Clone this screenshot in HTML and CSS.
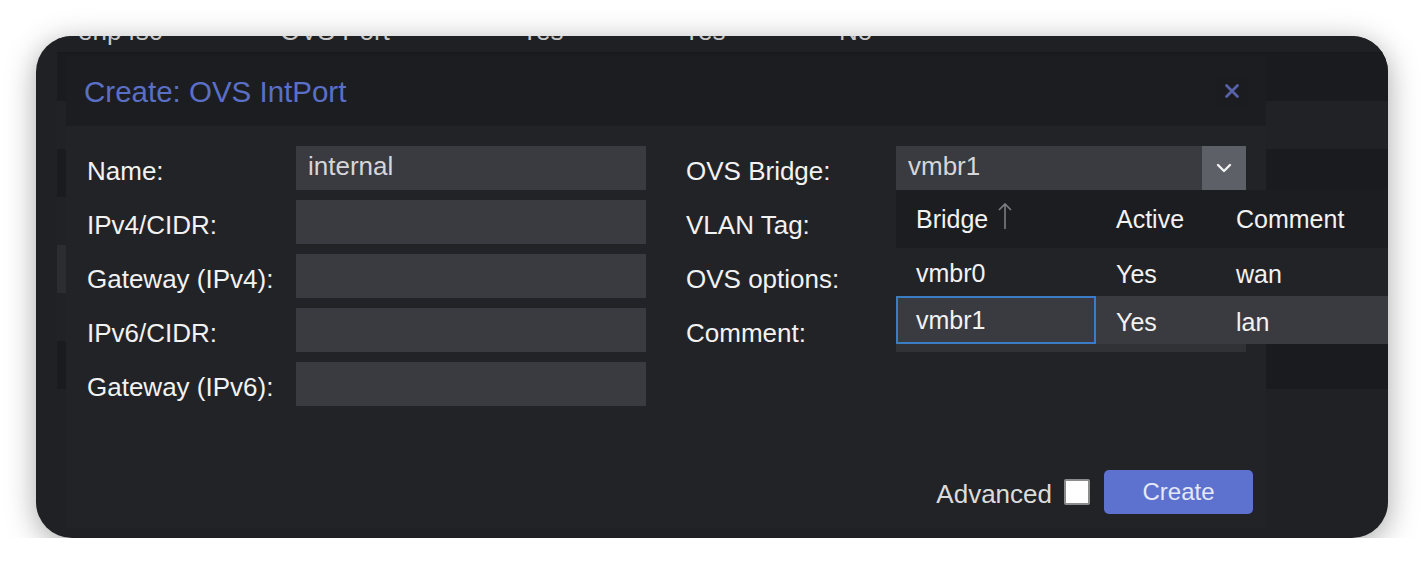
FILE: index.html
```html
<!DOCTYPE html>
<html>
<head>
<meta charset="utf-8">
<link rel="stylesheet" href="styles.css">
</head>
<body>
<div class="window">
  <div class="bg-grid">
    <div class="bg-row r0"><span class="c1">enp4s0</span><span class="c2">OVS Port</span><span class="c3">Yes</span><span class="c4">Yes</span><span class="c5">No</span></div>
    <div class="bg-row dark"></div>
    <div class="bg-row light"></div>
    <div class="bg-row dark"></div>
    <div class="bg-row light"></div>
    <div class="bg-row sel"></div>
    <div class="bg-row light"></div>
    <div class="bg-row dark"></div>
  </div>

  <div class="dialog">
    <div class="dlg-header">
      <span class="dlg-title">Create: OVS IntPort</span>
      <span class="dlg-close"><svg width="16" height="16" viewBox="0 0 16 16"><path d="M2.5 2.5 L13.5 13.5 M13.5 2.5 L2.5 13.5" stroke="#5862a8" stroke-width="2.8" stroke-linecap="round"/></svg></span>
    </div>
    <div class="dlg-body">
      <div class="col">
        <div class="field"><label class="lbl">Name:</label><div class="inp">internal</div></div>
        <div class="field"><label class="lbl">IPv4/CIDR:</label><div class="inp"></div></div>
        <div class="field"><label class="lbl">Gateway (IPv4):</label><div class="inp"></div></div>
        <div class="field"><label class="lbl">IPv6/CIDR:</label><div class="inp"></div></div>
        <div class="field"><label class="lbl">Gateway (IPv6):</label><div class="inp"></div></div>
      </div>
      <div class="col">
        <div class="field"><label class="lbl">OVS Bridge:</label>
          <div class="combo">
            <div class="combo-text">vmbr1</div>
            <div class="combo-trigger"><svg width="16" height="10" viewBox="0 0 16 10"><path d="M2 2 L8 8 L14 2" fill="none" stroke="#f2f2f2" stroke-width="2.4" stroke-linecap="round" stroke-linejoin="round"/></svg></div>
            <div class="picker">
              <div class="pk-row pk-head">
                <div class="pk-c1">Bridge<svg class="sort" width="14" height="28" viewBox="0 0 14 28"><path d="M7 2 L7 27 M1 8 L7 2 L13 8" fill="none" stroke="#7c7d82" stroke-width="1.6"/></svg></div>
                <div class="pk-c2">Active</div>
                <div class="pk-c3">Comment</div>
              </div>
              <div class="pk-row">
                <div class="pk-c1">vmbr0</div>
                <div class="pk-c2">Yes</div>
                <div class="pk-c3">wan</div>
              </div>
              <div class="pk-row pk-sel">
                <div class="pk-c1 focus">vmbr1</div>
                <div class="pk-c2">Yes</div>
                <div class="pk-c3">lan</div>
              </div>
            </div>
          </div>
        </div>
        <div class="field"><label class="lbl">VLAN Tag:</label></div>
        <div class="field"><label class="lbl">OVS options:</label></div>
        <div class="field"><label class="lbl">Comment:</label></div>
      </div>
    </div>
    <div class="dlg-footer">
      <span class="adv">Advanced</span>
      <span class="check"></span>
      <button class="btn">Create</button>
    </div>
  </div>
</div>
</body>
</html>
```

FILE: styles.css
```css
html, body {
  margin: 0;
  padding: 0;
  background: #ffffff;
}
body {
  font-family: "Liberation Sans", Arial, sans-serif;
}
.window {
  margin: 36px 0 0 36px;
  width: 1352px;
  height: 502px;
  border-radius: 36px;
  overflow: hidden;
  position: relative;
  background: #202125;
  box-shadow: 0 6px 30px rgba(0, 0, 0, 0.35);
}

/* background grid */
.bg-grid {
  margin-top: -31px;
  margin-left: 21px;
}
.bg-row {
  height: 48px;
  display: flex;
  font-size: 26px;
  color: #c9c9c9;
  line-height: 48px;
  background: #1f2023;
}
.bg-row.r0 {
  box-sizing: border-box;
  padding: 2px 0 0 21px;
  border-bottom: 1px solid #18191b;
}
.bg-row.dark { background: #1a1b1e; }
.bg-row.light { background: #212226; }
.bg-row.sel { background: #2c2d31; }
.c1 { width: 202px; }
.c2 { width: 241px; }
.c3 { width: 162px; }
.c4 { width: 156px; }

/* dialog */
.dialog {
  position: absolute;
  left: 30px;
  top: 20px;
  width: 1200px;
  height: 472px;
  display: flex;
  flex-direction: column;
  background: #222327;
}
.dlg-header {
  height: 70px;
  flex: none;
  display: flex;
  align-items: center;
  justify-content: space-between;
  padding: 0 18px;
  background: #1c1d20;
}
.dlg-title {
  font-size: 29.5px;
  color: #5a6fc6;
  padding-top: 2px;
}
.dlg-close {
  width: 32px;
  height: 32px;
  display: flex;
  align-items: center;
  justify-content: center;
  background: #1b1c1f;
}

.dlg-body {
  flex: 1;
  display: flex;
  gap: 40px;
  padding: 20px 20px 0 21px;
}
.col {
  width: 560px;
  display: flex;
  flex-direction: column;
  gap: 10px;
}
.col:first-child { width: 559px; }
.field {
  display: flex;
  height: 44px;
}
.lbl {
  flex: none;
  width: 209px;
  font-size: 26px;
  line-height: 44px;
  padding-top: 3px;
  color: #f2f2f2;
  white-space: nowrap;
}
.col:last-child .lbl { width: 210px; }
.inp {
  width: 350px;
  height: 44px;
  box-sizing: border-box;
  background: #3a3b40;
  padding-left: 12px;
  font-size: 26px;
  line-height: 40px;
  color: #d6d6d8;
}

.combo {
  position: relative;
  width: 350px;
  height: 44px;
  display: flex;
  background: #3a3b40;
}
.combo-text {
  flex: 1;
  padding-left: 12px;
  font-size: 26px;
  line-height: 40px;
  color: #d6d6d8;
}
.combo-trigger {
  width: 44px;
  height: 44px;
  background: #5e6067;
  display: flex;
  align-items: center;
  justify-content: center;
}

.picker {
  position: absolute;
  left: 0;
  top: 44px;
  width: 350px;
  height: 162px;
  background: #313236;
  z-index: 5;
}
.pk-row {
  width: 560px;
  height: 48px;
  display: flex;
  background: #222327;
  font-size: 25px;
  line-height: 48px;
  color: #f2f2f2;
}
.pk-row.pk-head {
  height: 58px;
  line-height: 58px;
  background: #1c1d20;
}
.pk-row.pk-sel { background: #3a3b40; }
.pk-c1, .pk-c2, .pk-c3 {
  box-sizing: border-box;
  padding-left: 20px;
  padding-top: 2px;
}
.pk-head .pk-c1, .pk-head .pk-c2, .pk-head .pk-c3 { padding-top: 0; }
.pk-c1 { width: 200px; display: flex; align-items: center; }
.pk-c2 { width: 120px; }
.pk-c3 { width: 240px; }
.pk-c1.focus {
  border: 2px solid #3a7cc6;
  padding-left: 18px;
  padding-top: 0;
  line-height: 44px;
}
.sort {
  margin-left: 10px;
  margin-top: -6px;
}

.dlg-footer {
  flex: none;
  display: flex;
  justify-content: flex-end;
  align-items: center;
  padding: 0 13px 14px 0;
}
.adv {
  font-size: 26px;
  color: #dcdcdc;
  padding-top: 4px;
}
.check {
  width: 22px;
  height: 22px;
  margin-left: 12px;
  background: #ffffff;
  border: 2px solid #8c8c8c;
  border-radius: 2px;
  box-sizing: content-box;
}
.btn {
  margin-left: 14px;
  width: 149px;
  height: 44px;
  border: none;
  border-radius: 5px;
  background: #5d71cf;
  color: #e4e8f8;
  font-family: "Liberation Sans", Arial, sans-serif;
  font-size: 24px;
  padding: 0;
}
```
